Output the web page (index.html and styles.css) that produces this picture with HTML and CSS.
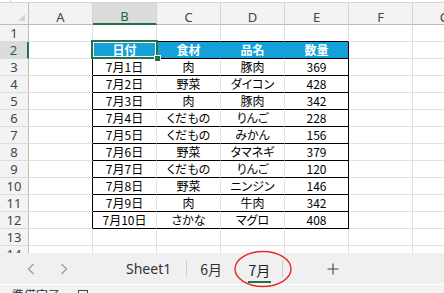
FILE: index.html
```html
<!DOCTYPE html>
<html lang="ja">
<head>
<meta charset="utf-8">
<link rel="stylesheet" href="styles.css">
</head>
<body>
<div class="app">
  <div class="topstrip"><span class="fx-edge"></span></div>
  <div class="sheet">
    <div class="c corner"><span class="tri"></span></div>
    <div class="c ch">A</div><div class="c ch sel">B</div><div class="c ch">C</div><div class="c ch">D</div><div class="c ch">E</div><div class="c ch">F</div><div class="c ch">G</div>

    <div class="c rh">1</div><div class="c"></div><div class="c t-b"></div><div class="c t-b"></div><div class="c t-b"></div><div class="c t-b"></div><div class="c"></div><div class="c"></div>

    <div class="c rh sel">2</div><div class="c t-l"></div><div class="c hd t-b active">日付<span class="selbox"><span class="handle"></span></span></div><div class="c hd t-b">食材</div><div class="c hd t-b">品名</div><div class="c hd t-b t-r">数量</div><div class="c"></div><div class="c"></div>

    <div class="c rh">3</div><div class="c t-l"></div><div class="c t-b">7月1日</div><div class="c t-b">肉</div><div class="c t-b">豚肉</div><div class="c t-b t-r">369</div><div class="c"></div><div class="c"></div>
    <div class="c rh">4</div><div class="c t-l"></div><div class="c t-b">7月2日</div><div class="c t-b">野菜</div><div class="c t-b">ダイコン</div><div class="c t-b t-r">428</div><div class="c"></div><div class="c"></div>
    <div class="c rh">5</div><div class="c t-l"></div><div class="c t-b">7月3日</div><div class="c t-b">肉</div><div class="c t-b">豚肉</div><div class="c t-b t-r">342</div><div class="c"></div><div class="c"></div>
    <div class="c rh">6</div><div class="c t-l"></div><div class="c t-b">7月4日</div><div class="c t-b">くだもの</div><div class="c t-b">りんご</div><div class="c t-b t-r">228</div><div class="c"></div><div class="c"></div>
    <div class="c rh">7</div><div class="c t-l"></div><div class="c t-b">7月5日</div><div class="c t-b">くだもの</div><div class="c t-b">みかん</div><div class="c t-b t-r">156</div><div class="c"></div><div class="c"></div>
    <div class="c rh">8</div><div class="c t-l"></div><div class="c t-b">7月6日</div><div class="c t-b">野菜</div><div class="c t-b">タマネギ</div><div class="c t-b t-r">379</div><div class="c"></div><div class="c"></div>
    <div class="c rh">9</div><div class="c t-l"></div><div class="c t-b">7月7日</div><div class="c t-b">くだもの</div><div class="c t-b">りんご</div><div class="c t-b t-r">120</div><div class="c"></div><div class="c"></div>
    <div class="c rh">10</div><div class="c t-l"></div><div class="c t-b">7月8日</div><div class="c t-b">野菜</div><div class="c t-b">ニンジン</div><div class="c t-b t-r">146</div><div class="c"></div><div class="c"></div>
    <div class="c rh">11</div><div class="c t-l"></div><div class="c t-b">7月9日</div><div class="c t-b">肉</div><div class="c t-b">牛肉</div><div class="c t-b t-r">342</div><div class="c"></div><div class="c"></div>
    <div class="c rh">12</div><div class="c t-l"></div><div class="c t-b">7月10日</div><div class="c t-b">さかな</div><div class="c t-b">マグロ</div><div class="c t-b t-r">408</div><div class="c"></div><div class="c"></div>

    <div class="c rh">13</div><div class="c"></div><div class="c"></div><div class="c"></div><div class="c"></div><div class="c"></div><div class="c"></div><div class="c"></div>
    <div class="c rh">14</div><div class="c"></div><div class="c"></div><div class="c"></div><div class="c"></div><div class="c"></div><div class="c"></div><div class="c"></div>
  </div>

  <div class="tabbar">
    <svg class="nav nav-prev" width="8" height="12" viewBox="0 0 8 12"><polyline points="6.5,1 1.5,6 6.5,11" fill="none" stroke="#9a9a9a" stroke-width="1.2"/></svg>
    <svg class="nav nav-next" width="8" height="12" viewBox="0 0 8 12"><polyline points="1.5,1 6.5,6 1.5,11" fill="none" stroke="#9a9a9a" stroke-width="1.2"/></svg>
    <span class="tab tab-sheet1">Sheet1</span>
    <span class="sep sep-1"></span>
    <span class="tab tab-jun">6月</span>
    <span class="tab tab-jul">
      <span class="tab-label">7月</span>
      <span class="tab-underline"></span>
      <svg class="circle" width="60" height="38" viewBox="0 0 60 38"><ellipse cx="30" cy="19" rx="28" ry="17.5" fill="none" stroke="#e8262a" stroke-width="1.4"/></svg>
    </span>
    <span class="sep sep-2"></span>
    <svg class="add" width="12" height="12" viewBox="0 0 12 12"><path d="M6 0.5V11.5M0.5 6H11.5" stroke="#444" stroke-width="1.1" fill="none"/></svg>
  </div>

  <div class="status">
    <span class="status-text">準備完了</span>
    <span class="status-icon"></span>
  </div>
</div>
</body>
</html>
```

FILE: styles.css
```css
html, body {
  margin: 0;
  padding: 0;
}
body {
  width: 444px;
  height: 293px;
  overflow: hidden;
  background: #fff;
  font-family: "Noto Sans CJK JP", "Noto Sans", sans-serif;
}
.app {
  width: 444px;
  height: 293px;
  display: flex;
  flex-direction: column;
  overflow: hidden;
}
.topstrip {
  height: 2px;
  flex: none;
  border-bottom: 1px solid #d6d6d6;
  background: #fff;
  display: flex;
}
.fx-edge {
  margin-left: 10px;
  width: 1px;
  background: #d6d6d6;
}
.sheet {
  flex: none;
  height: 250px;
  overflow: hidden;
  display: grid;
  grid-template-columns: 29px repeat(7, 64px);
  grid-template-rows: 22px;
  grid-auto-rows: 17px;
}
.c {
  box-sizing: border-box;
  border-right: 1px solid #e1e1e1;
  border-bottom: 1px solid #e1e1e1;
  display: flex;
  align-items: center;
  justify-content: center;
  font-size: 12px;
  line-height: 1;
  color: #000;
  white-space: nowrap;
  font-feature-settings: "palt";
}
.corner {
  background: #f3f3f3;
  border-right-color: #bcbcbc;
  border-bottom-color: #bcbcbc;
  align-items: flex-end;
  justify-content: flex-end;
  padding: 0 3px 3px 0;
}
.tri {
  width: 0;
  height: 0;
  border-left: 7px solid transparent;
  border-bottom: 7px solid #d3d3d3;
}
.ch {
  background: #f3f3f3;
  border-right-color: #d4d4d4;
  border-bottom-color: #bcbcbc;
  color: #444;
  font-family: "Noto Sans", sans-serif;
  font-size: 13px;
  padding-top: 7px;
}
.ch.sel {
  background: #dcdcdc;
  color: #1e6b3f;
  border-bottom: 2px solid #217346;
  padding-top: 6px;
}
.rh {
  background: #f3f3f3;
  border-right-color: #bcbcbc;
  border-bottom-color: #dcdcdc;
  color: #444;
  font-family: "Noto Sans", sans-serif;
  font-size: 13px;
}
.rh.sel {
  background: #dcdcdc;
  border-right: 2px solid #217346;
  color: #1e6b3f;
}
.t-l { border-right-color: #000; }
.t-r { border-right-color: #000; }
.t-b { border-bottom-color: #000; }
.hd {
  background: #14a0d8;
  border-right-color: #14a0d8;
  color: #fff;
  font-weight: bold;
}
.hd.t-r { border-right-color: #000; }
.active {
  position: relative;
}
.selbox {
  position: absolute;
  left: -2px;
  top: -2px;
  right: -2px;
  bottom: -1px;
  border: 2px solid #217346;
  box-shadow: inset 0 0 0 1px #fff;
}
.handle {
  position: absolute;
  right: -5px;
  bottom: -5px;
  width: 5px;
  height: 5px;
  background: #217346;
  border: 1px solid #fff;
}
.tabbar {
  flex: none;
  height: 31px;
  background: #f0f0f0;
  border-bottom: 1px solid #fff;
  display: flex;
  align-items: center;
  font-family: "Noto Sans", "Noto Sans CJK JP", sans-serif;
  font-size: 14px;
  color: #333;
}
.nav { flex: none; }
.nav-prev { margin-left: 27px; }
.nav-next { margin-left: 25px; }
.tab { flex: none; line-height: 1; }
.tab-sheet1 { margin-left: 58px; }
.sep {
  flex: none;
  width: 1px;
  height: 17px;
  background: #cfcfcf;
}
.sep-1 { margin-left: 15px; }
.tab-jun { margin-left: 13px; font-family: "Noto Sans CJK JP", sans-serif; }
.tab-jul {
  margin-left: 26px;
  position: relative;
  display: flex;
  flex-direction: column;
  align-items: center;
  padding-top: 9px;
  font-family: "Noto Sans CJK JP", sans-serif;
  color: #222;
}
.tab-label { line-height: 1; }
.tab-underline {
  margin-top: 4px;
  width: 23px;
  height: 2px;
  background: #217346;
}
.circle {
  position: absolute;
  left: -15px;
  top: -4px;
}
.sep-2 { margin-left: 11px; }
.add { flex: none; margin-left: 44px; }
.status {
  flex: none;
  height: 24px;
  background: #f3f3f3;
  display: flex;
  align-items: flex-start;
  padding-top: 4px;
  font-size: 12px;
  color: #333;
}
.status-text { margin-left: 12px; line-height: 1; }
.status-icon {
  margin-left: 18px;
  margin-top: 1px;
  width: 10px;
  height: 8px;
  border: 1px solid #444;
  box-sizing: border-box;
}
```
